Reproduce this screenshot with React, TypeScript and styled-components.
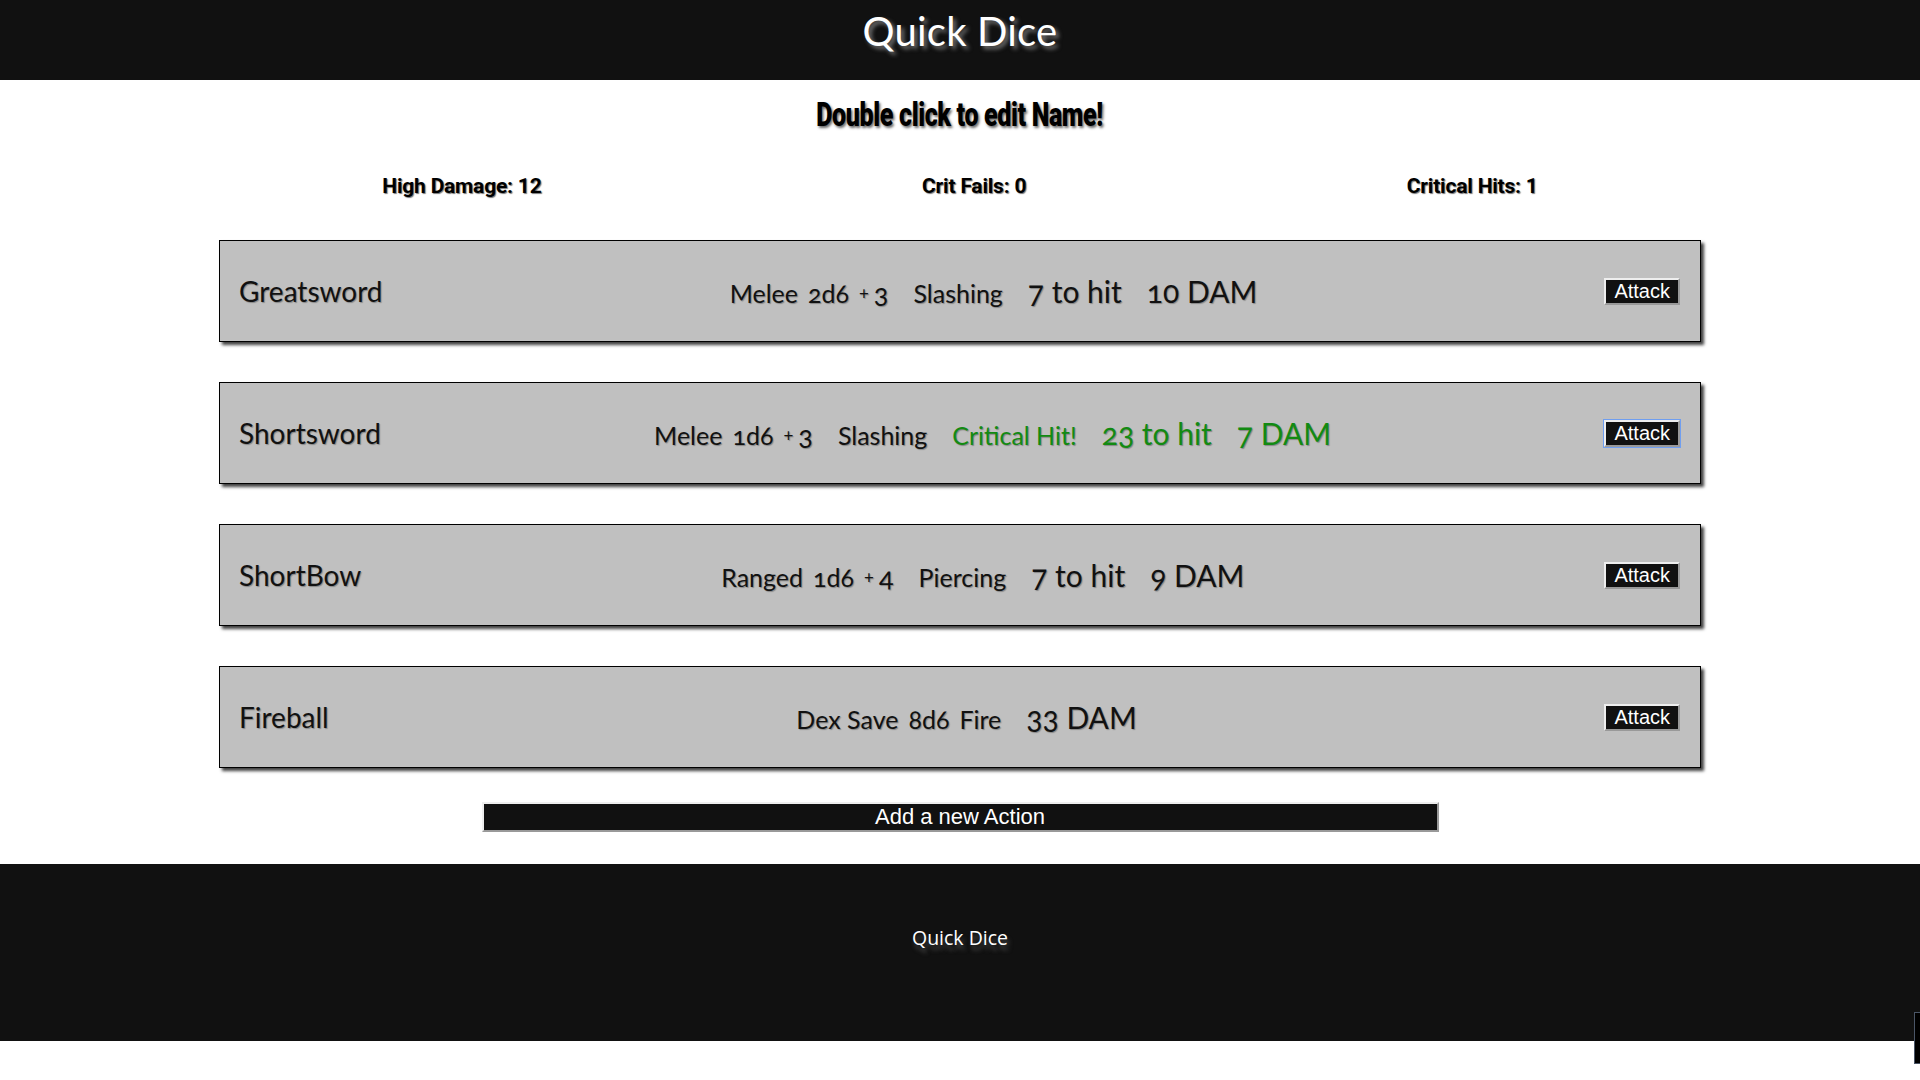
import React from "react";
import styled, { createGlobalStyle } from "styled-components";

const GlobalStyle = createGlobalStyle`
  html, body {
    margin: 0;
    padding: 0;
    background: #ffffff;
  }
  body {
    font-family: "Lato", "Open Sans", sans-serif;
    color: #111;
  }
  * { box-sizing: content-box; }
`;

const Header = styled.header`
  height: 80px;
  background: #111111;
  display: flex;
  align-items: center;
  justify-content: center;
`;

const Title = styled.h1`
  margin: 0;
  margin-top: -18px;
  font-family: "Lato", "Open Sans", sans-serif;
  font-weight: 400;
  font-size: 40px;
  color: #ffffff;
  text-shadow: 3px 3px 4px #7a7a7a;
  letter-spacing: 0.2px;
`;

const Main = styled.main`
  display: flex;
  flex-direction: column;
  align-items: center;
`;

const NameHeading = styled.h2`
  margin: 15px 0 0 0;
  height: 40px;
  line-height: 40px;
  font-family: "Liberation Sans Narrow", "Roboto", sans-serif;
  font-weight: 900;
  font-size: 33px;
  color: #000;
  text-shadow: 2px 2px 3px #6a6a6a;
  transform: scaleX(0.76);
  letter-spacing: -0.5px;
`;

const StatsRow = styled.div`
  width: 80%;
  margin-top: 39px;
  display: flex;
  justify-content: space-around;
`;

const Stat = styled.span`
  font-family: "Roboto", "Liberation Sans", sans-serif;
  font-weight: 700;
  font-size: 21px;
  line-height: 24px;
  letter-spacing: -0.2px;
  color: #000;
  text-shadow: 1px 1px 1px #777;
`;

const ActionList = styled.div`
  margin-top: 42px;
  display: flex;
  flex-direction: column;
  gap: 40px;
  width: calc(75% + 42px);
`;

const Card = styled.div`
  height: 60px;
  padding: 20px 20px 20px 19px;
  border: 1px solid #000;
  background: #c0c0c0;
  box-shadow: 3px 3px 3px rgba(0, 0, 0, 0.75);
  display: flex;
  align-items: center;
  justify-content: space-between;
`;

const ActionName = styled.span`
  font-family: "Lato", "Open Sans", sans-serif;
  font-size: 28px;
  color: #111;
  text-shadow: 1px 1px 1px rgba(0, 0, 0, 0.3);
`;

const Middle = styled.div`
  display: flex;
  align-items: baseline;
  gap: 25px;
`;

const Group = styled.span`
  display: inline-flex;
  align-items: baseline;
  gap: 10px;
`;

const Info = styled.span<{ $crit?: boolean }>`
  font-family: "Lato", "Open Sans", sans-serif;
  font-size: 25px;
  color: ${(p) => (p.$crit ? "#128a12" : "#111")};
  text-shadow: 1px 1px 1px rgba(0, 0, 0, 0.3);
  font-variant-numeric: oldstyle-nums;
`;

const Big = styled.span<{ $crit?: boolean }>`
  font-family: "Lato", "Open Sans", sans-serif;
  font-size: 30px;
  color: ${(p) => (p.$crit ? "#128a12" : "#111")};
  text-shadow: 1px 1px 1px rgba(0, 0, 0, 0.3);
  font-variant-numeric: oldstyle-nums;
`;

const Mod = styled.span`
  display: inline-flex;
  align-items: baseline;
  gap: 5px;
  font-family: "Lato", "Open Sans", sans-serif;
  color: #111;
  text-shadow: 1px 1px 1px rgba(0, 0, 0, 0.3);
`;

const Plus = styled.span`
  font-size: 17px;
  position: relative;
  top: -3px;
`;

const ModNum = styled.span`
  font-size: 27px;
  font-variant-numeric: oldstyle-nums;
`;

const AttackButton = styled.button<{ $focused?: boolean }>`
  font-family: "Liberation Sans", Arial, sans-serif;
  font-size: 20px;
  line-height: 23px;
  padding: 0 8px;
  margin: 0;
  color: #fff;
  background: #111;
  border-width: 2px;
  border-style: solid;
  border-color: #eeeeee #999999 #999999 #eeeeee;
  box-shadow: ${(p) => (p.$focused ? "0 0 0 1px #6f9ef0" : "none")};
  cursor: pointer;
`;

const AddButton = styled.button`
  box-sizing: border-box;
  margin-top: 34px;
  width: 957px;
  height: 30px;
  padding: 0;
  font-family: "Liberation Sans", Arial, sans-serif;
  font-size: 22px;
  line-height: 26px;
  color: #fff;
  background: #111;
  border-width: 2px;
  border-style: solid;
  border-color: #eeeeee #999999 #999999 #eeeeee;
  cursor: pointer;
`;

const Footer = styled.footer`
  margin-top: 32px;
  height: 177px;
  box-sizing: border-box;
  padding-top: 60px;
  background: #111111;
  display: flex;
  align-items: flex-start;
  justify-content: center;
`;

const FooterText = styled.p`
  margin: 0;
  font-family: "Open Sans", "Noto Sans", sans-serif;
  font-size: 19.5px;
  line-height: 28px;
  color: #fff;
  text-shadow: 2px 5px 4px #4a4a4a;
`;

const CornerWidget = styled.div`
  position: fixed;
  right: 0;
  bottom: 16px;
  width: 5px;
  height: 50px;
  background: #000;
  border: 1px solid #4a5566;
  border-right: none;
`;

type Action = {
  name: string;
  kind: string;
  dice: string;
  mod?: number;
  type: string;
  crit?: boolean;
  toHit?: number;
  dam: number;
};

const actions: Action[] = [
  { name: "Greatsword", kind: "Melee", dice: "2d6", mod: 3, type: "Slashing", toHit: 7, dam: 10 },
  { name: "Shortsword", kind: "Melee", dice: "1d6", mod: 3, type: "Slashing", crit: true, toHit: 23, dam: 7 },
  { name: "ShortBow", kind: "Ranged", dice: "1d6", mod: 4, type: "Piercing", toHit: 7, dam: 9 },
  { name: "Fireball", kind: "Dex Save", dice: "8d6", type: "Fire", dam: 33 },
];

export default function App() {
  return (
    <>
      <GlobalStyle />
      <Header>
        <Title>Quick Dice</Title>
      </Header>
      <Main>
        <NameHeading>Double click to edit Name!</NameHeading>
        <StatsRow>
          <Stat>High Damage: 12</Stat>
          <Stat>Crit Fails: 0</Stat>
          <Stat>Critical Hits: 1</Stat>
        </StatsRow>
        <ActionList>
          {actions.map((a, i) => (
            <Card key={a.name}>
              <ActionName>{a.name}</ActionName>
              <Middle>
                <Group>
                  <Info>{a.kind}</Info>
                  <Info>{a.dice}</Info>
                  {a.mod !== undefined && (
                    <Mod>
                      <Plus>+</Plus>
                      <ModNum>{a.mod}</ModNum>
                    </Mod>
                  )}
                  {a.mod === undefined && <Info>{a.type}</Info>}
                </Group>
                {a.mod !== undefined && <Info>{a.type}</Info>}
                {a.crit && <Info $crit>Critical Hit!</Info>}
                {a.toHit !== undefined && <Big $crit={a.crit}>{a.toHit} to hit</Big>}
                <Big $crit={a.crit}>{a.dam} DAM</Big>
              </Middle>
              <AttackButton $focused={i === 1}>Attack</AttackButton>
            </Card>
          ))}
        </ActionList>
        <AddButton>Add a new Action</AddButton>
      </Main>
      <Footer>
        <FooterText>Quick Dice</FooterText>
      </Footer>
      <CornerWidget />
    </>
  );
}
